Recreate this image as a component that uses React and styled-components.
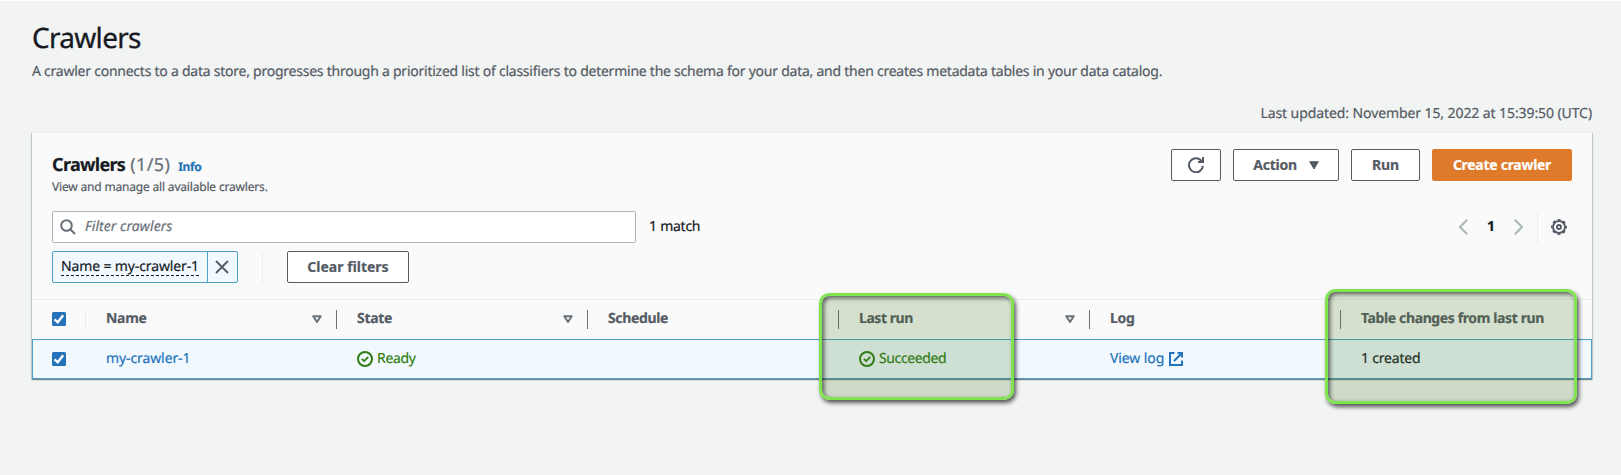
import React from "react";
import styled, { createGlobalStyle, css } from "styled-components";

const c = {
  ink: "#16191f",
  grey: "#545b64",
  muted: "#687078",
  line: "#eaeded",
  field: "#aab7b8",
  link: "#2273bb",
  select: "#4aa0c6",
  selectBg: "#f1f9ff",
  ok: "#2f7d12",
};

const GlobalStyle = createGlobalStyle`
  *, *::before, *::after { box-sizing: border-box; }
  body {
    margin: 0;
    background: #f2f3f3;
    color: ${c.ink};
    font: 400 14px/22px "Noto Sans", "Open Sans", sans-serif;
    text-rendering: geometricPrecision;
    -webkit-text-stroke: 0.2px;
  }
  svg { display: block; flex: none; }
`;

const tracking = css`letter-spacing: ${(p) => p.$track || 0}px;`;

const Page = styled.main`
  height: 475px;
  border-top: 1px solid #fff;
  padding: 19px 29px 0 32px;
  overflow: hidden;
`;
const PageTitle = styled.h1`
  margin: 0;
  font-size: 28px;
  line-height: 36px;
  font-weight: 400;
  letter-spacing: -0.7px;
  -webkit-text-stroke: 0.3px;
`;
const PageText = styled.p`
  margin: 5px 0 0;
  color: ${c.grey};
  letter-spacing: -0.242px;
  white-space: nowrap;
`;
const Updated = styled.p`
  margin: 20px 0 7px;
  color: ${c.grey};
  letter-spacing: -0.09px;
  text-align: right;
`;

const Panel = styled.section`
  position: relative;
  border-top: 1px solid ${c.line};
  background: #fafafa;
  box-shadow: 0 1px 1px 0 rgba(0, 28, 36, 0.3), 1px 1px 1px 0 rgba(0, 28, 36, 0.15),
    -1px 1px 1px 0 rgba(0, 28, 36, 0.15);
`;
const PanelHead = styled.header`
  display: flex;
  justify-content: space-between;
  height: 63px;
  padding: 16px 20px 0;
`;
const HeadingLine = styled.div`
  display: flex;
  align-items: baseline;
  height: 30px;
  line-height: 32px;
`;
const Heading = styled.h2`
  margin: 0;
  font-size: 18px;
  font-weight: 700;
  letter-spacing: -0.68px;
`;
const Count = styled.span`
  margin-left: 5px;
  font-size: 18px;
  color: ${c.muted};
  letter-spacing: 0.4px;
`;
const Info = styled.a`
  margin-left: 8px;
  font-size: 12px;
  font-weight: 700;
  color: ${c.link};
  letter-spacing: -0.35px;
`;
const Hint = styled.p`
  margin: 0;
  font-size: 12px;
  line-height: 16px;
  color: ${c.grey};
  letter-spacing: -0.18px;
`;
const Actions = styled.div`
  display: flex;
  gap: 12px;
  height: 32px;
`;
const Button = styled.button`
  display: flex;
  align-items: center;
  justify-content: center;
  gap: 12px;
  width: ${(p) => p.$width}px;
  height: 32px;
  padding: 0;
  border: 1px solid ${(p) => (p.$primary ? "#df7a2b" : c.grey)};
  border-radius: 2px;
  background: ${(p) => (p.$primary ? "#df7a2b" : "#fff")};
  color: ${(p) => (p.$primary ? "#fff" : c.grey)};
  font: inherit;
  font-weight: 700;
  ${tracking}
`;

const Tools = styled.div`
  display: flex;
  align-items: center;
  height: 32px;
  margin-top: 15px;
  padding: 0 20px;
`;
const Search = styled.label`
  display: flex;
  align-items: center;
  gap: 9px;
  width: 584px;
  height: 32px;
  padding-left: 7px;
  border: 1px solid ${c.field};
  border-radius: 2px;
  background: #fff;
`;
const Placeholder = styled.span`
  font-style: italic;
  color: ${c.muted};
  letter-spacing: 0.05px;
`;
const Matches = styled.span`
  margin-left: 13px;
  letter-spacing: -0.25px;
`;
const Pager = styled.nav`
  display: flex;
  align-items: center;
  margin-left: auto;
  padding-right: 5px;
`;
const PageNumber = styled.b`
  width: 46px;
  text-align: center;
`;
const PagerRule = styled.i`
  width: 1px;
  height: 32px;
  margin: 0 13px 0 14px;
  background: ${c.line};
`;

const Filters = styled.div`
  display: flex;
  height: 32px;
  margin-top: 8px;
  padding: 0 20px;
`;
const Token = styled.div`
  display: flex;
  width: 186px;
  height: 32px;
  border: 1px solid ${c.select};
  border-radius: 2px;
  background: ${c.selectBg};
`;
const TokenText = styled.div`
  width: 155px;
  padding: 4px 0 0 8px;
  border-right: 1px solid ${c.select};
`;
const TokenLabel = styled.span`
  display: block;
  width: 138px;
  height: 20px;
  line-height: 22px;
  white-space: nowrap;
  letter-spacing: -0.13px;
  background: repeating-linear-gradient(90deg, ${c.ink} 0 3px, transparent 3px 5px) 0 100% / 100% 1px no-repeat;
`;
const TokenClose = styled.div`
  display: flex;
  flex: 1;
  align-items: center;
  padding-left: 7px;
`;
const FilterRule = styled.i`
  width: 1px;
  margin: 0 24px;
  background: ${c.line};
`;

const Table = styled.div`
  margin-top: 16px;
  border-top: 1px solid ${c.line};
`;
const Row = styled.div`
  display: grid;
  grid-template-columns: 54px 251px 251px 251px 251px 251px 1fr;
  align-items: center;
  height: ${(p) => (p.$selected ? 40 : 39)}px;
  ${(p) =>
    p.$selected &&
    css`
      border: 1px solid ${c.select};
      background: ${c.selectBg};
      grid-template-columns: 53px 251px 251px 251px 251px 251px 1fr;
    `}
`;
const CheckCell = styled.div`
  display: flex;
  align-items: center;
  height: 19px;
  padding-left: ${(p) => (p.$rule ? 20 : 19)}px;
  padding-bottom: ${(p) => (p.$rule ? 1 : 0)}px;
  border-right: 1px solid ${(p) => (p.$rule ? c.line : "transparent")};
`;
const HeadCell = styled.div`
  display: flex;
  align-items: center;
  justify-content: space-between;
  height: 19px;
  padding: 0 14px 1px 20px;
  border-right: 1px solid ${(p) => (p.$last ? "transparent" : c.muted)};
  color: ${c.grey};
  font-weight: 700;
  line-height: 18px;
  white-space: nowrap;
  ${tracking}
`;
const Cell = styled.div`
  display: flex;
  align-items: center;
  gap: 4px;
  padding-left: 20px;
  color: ${(p) => p.$color || c.ink};
  white-space: nowrap;
  ${tracking}
`;

const Highlight = styled.div`
  position: absolute;
  left: ${(p) => p.$x}px;
  top: ${(p) => p.$y}px;
  width: ${(p) => p.$w}px;
  height: ${(p) => p.$h}px;
  border: 3px solid #80e450;
  border-radius: 10px;
  background: rgba(70, 120, 35, 0.2);
  background-clip: padding-box;
  box-shadow: 2px 3px 4px rgba(0, 0, 0, 0.65), inset 2px 2px 4px rgba(0, 0, 0, 0.6);
  pointer-events: none;
`;

const Svg = ({ children }) => (
  <svg width="16" height="16" viewBox="0 0 16 16" fill="none" stroke="currentColor" strokeWidth="2">
    {children}
  </svg>
);
const Refresh = () => (
  <Svg>
    <path d="M15 8.9A7 7 0 1 1 12.9 3.2L15 5" />
    <path d="M15 0v5h-5" />
  </Svg>
);
const Caret = () => (
  <svg width="10" height="9" viewBox="0 0 10 9" fill="currentColor" stroke="currentColor" strokeLinejoin="round">
    <path d="M.7.7h8.6L5 8z" />
  </svg>
);
const SortIcon = () => (
  <svg width="10" height="9" viewBox="0 0 10 9" fill="none" stroke={c.muted} strokeWidth="2" strokeLinejoin="round">
    <path d="M1.3 1.2h7.4L5 7z" />
  </svg>
);
const SearchIcon = () => (
  <svg width="16" height="16" viewBox="0 0 16 16" fill="none" stroke={c.muted} strokeWidth="2">
    <circle cx="6.5" cy="6.5" r="5.3" />
    <path d="M10.3 10.3 15 15" />
  </svg>
);
const Chevron = ({ right }) => (
  <svg width="9" height="16" viewBox="0 0 9 16" fill="none" stroke={c.field} strokeWidth="2">
    <path d={right ? "M.8.8 8 8 .8 15.2" : "M8.2.8 1 8l7.2 7.2"} />
  </svg>
);
const Gear = () => (
  <svg width="16" height="16" viewBox="0 0 16 16" fill="none" stroke={c.grey}>
    <circle cx="8" cy="8" r="6" strokeWidth="1.9" />
    <circle cx="8" cy="8" r="7.2" strokeWidth="1.6" strokeDasharray="2.827 2.827" strokeDashoffset="1.414" />
    <circle cx="8" cy="8" r="2" strokeWidth="1.9" />
  </svg>
);
const CloseIcon = () => (
  <svg width="14" height="14" viewBox="0 0 14 14" fill="none" stroke={c.grey} strokeWidth="1.8">
    <path d="m1 1 12 12M13 1 1 13" />
  </svg>
);
const Checkbox = () => (
  <svg width="14" height="14" viewBox="0 0 14 14" role="img">
    <rect width="14" height="14" rx="1.5" fill="#2472b8" />
    <path d="m2.5 7.4 3.2 2.9 5.5-7" fill="none" stroke="#fff" strokeWidth="2.3" />
  </svg>
);
const OkIcon = () => (
  <Svg>
    <circle cx="8" cy="8" r="7" />
    <path d="m4.8 7.9 2.3 2.2 4.2-4.1" strokeWidth="1.8" />
  </Svg>
);
const External = () => (
  <Svg>
    <path d="M6.5 2H2v12h12V9.5M9.5 2H14v4.5M14 2 6 10" />
  </Svg>
);

export default function App() {
  return (
    <>
      <GlobalStyle />
      <Page>
        <PageTitle>Crawlers</PageTitle>
        <PageText>
          A crawler connects to a data store, progresses through a prioritized list of classifiers to determine the
          schema for your data, and then creates metadata tables in your data catalog.
        </PageText>
        <Updated>Last updated: November 15, 2022 at 15:39:50 (UTC)</Updated>

        <Panel>
          <PanelHead>
            <div>
              <HeadingLine>
                <Heading>Crawlers</Heading>
                <Count>(1/5)</Count>
                <Info>Info</Info>
              </HeadingLine>
              <Hint>View and manage all available crawlers.</Hint>
            </div>
            <Actions>
              <Button $width={50} aria-label="Refresh"><Refresh /></Button>
              <Button $width={106} $track={-0.25}>Action <Caret /></Button>
              <Button $width={69} $track={-0.2}>Run</Button>
              <Button $width={140} $track={-0.28} $primary>Create crawler</Button>
            </Actions>
          </PanelHead>

          <Tools>
            <Search>
              <SearchIcon />
              <Placeholder>Filter crawlers</Placeholder>
            </Search>
            <Matches>1 match</Matches>
            <Pager>
              <Chevron />
              <PageNumber>1</PageNumber>
              <Chevron right />
              <PagerRule />
              <Gear />
            </Pager>
          </Tools>

          <Filters>
            <Token>
              <TokenText><TokenLabel>Name = my-crawler-1</TokenLabel></TokenText>
              <TokenClose><CloseIcon /></TokenClose>
            </Token>
            <FilterRule />
            <Button $width={122}>Clear filters</Button>
          </Filters>

          <Table>
            <Row>
              <CheckCell $rule><Checkbox /></CheckCell>
              <HeadCell $track={-0.3}>Name <SortIcon /></HeadCell>
              <HeadCell $track={-0.3}>State <SortIcon /></HeadCell>
              <HeadCell $track={-0.35}>Schedule</HeadCell>
              <HeadCell $track={-0.45}>Last run <SortIcon /></HeadCell>
              <HeadCell $track={-0.3}>Log</HeadCell>
              <HeadCell $track={-0.38} $last>Table changes from last run</HeadCell>
            </Row>
            <Row $selected>
              <CheckCell><Checkbox /></CheckCell>
              <Cell $color={c.link} $track={-0.1}>my-crawler-1</Cell>
              <Cell $color={c.ok} $track={-0.33}><OkIcon />Ready</Cell>
              <Cell />
              <Cell $color={c.ok} $track={-0.37}><OkIcon />Succeeded</Cell>
              <Cell $color={c.link} $track={-0.1}>View log <External /></Cell>
              <Cell $track={-0.2}>1 created</Cell>
            </Row>
          </Table>

          <Highlight $x={787} $y={160} $w={195} $h={107} />
          <Highlight $x={1293} $y={156} $w={252} $h={115} />
        </Panel>
      </Page>
    </>
  );
}
